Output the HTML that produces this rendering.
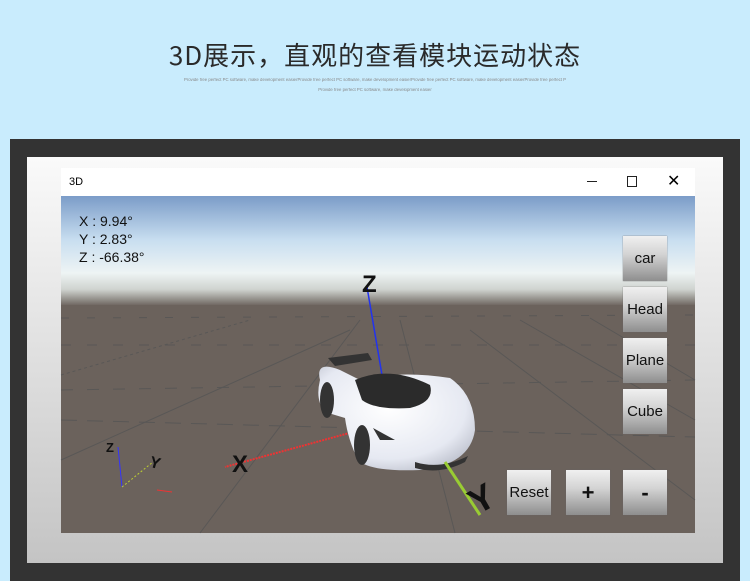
<!DOCTYPE html>
<html><head><meta charset="utf-8"><style>
body{margin:0;width:750px;height:581px;overflow:hidden;background:#c9ecfd;font-family:"Liberation Sans","Noto Sans CJK SC",sans-serif;position:relative}
.t{position:absolute;top:36px;left:0;width:750px;text-align:center;font-size:26px;color:#2a2a2a;font-family:"Noto Sans CJK SC","Liberation Sans",sans-serif;font-weight:400;letter-spacing:1px}
.s{position:absolute;left:0;width:750px;text-align:center;font-size:5.5px;color:#888;transform:scale(.78);transform-origin:375px 0}
.btn{position:absolute;width:44px;height:45px;background:linear-gradient(#f0f0f0,#d4d4d4 40%,#8e8e8e);color:#111;font-size:15px;display:flex;align-items:center;justify-content:center;box-shadow:0 0 1px #666}
</style></head><body>
<div class="t">3D展示，直观的查看模块运动状态</div>
<div class="s" style="top:78px">Provide free perfect PC software, make development easierProvide free perfect PC software, make development easierProvide free perfect PC software, make development easierProvide free perfect P</div>
<div class="s" style="top:88px">Provide free perfect PC software, make development easier</div>
<div style="position:absolute;left:10px;top:139px;width:730px;height:442px;background:#333"></div>
<div style="position:absolute;left:27px;top:157px;width:696px;height:406px;background:linear-gradient(#fafafa,#c4c4c4)"></div>
<div style="position:absolute;left:61px;top:168px;width:634px;height:28px;background:#fff;font-size:11px">
<span style="position:absolute;left:8px;top:8px">3D</span>
<span style="position:absolute;left:526px;top:13px;width:10px;height:1px;background:#222"></span>
<span style="position:absolute;left:566px;top:8px;width:8px;height:9px;border:1px solid #222"></span>
<span style="position:absolute;left:606px;top:3px;font-size:16px">✕</span>
</div>
<svg style="position:absolute;left:0;top:0" width="750" height="581" viewBox="0 0 750 581">
<defs><linearGradient id="sky" x1="0" y1="0" x2="0" y2="1">
<stop offset="0" stop-color="#7b9cc8"/><stop offset=".4" stop-color="#c8def0"/><stop offset=".7" stop-color="#eef4f4"/><stop offset=".85" stop-color="#cfd3cf"/><stop offset="1" stop-color="#6b625c"/></linearGradient>
<radialGradient id="car" cx=".45" cy=".4" r=".7"><stop offset="0" stop-color="#fff"/><stop offset=".7" stop-color="#e6e9f2"/><stop offset="1" stop-color="#b8bcc8"/></radialGradient></defs>
<rect x="61" y="196" width="634" height="110" fill="url(#sky)"/>
<rect x="61" y="305" width="634" height="228" fill="#6b625c"/>
<g stroke="#555" stroke-width="1" fill="none" opacity=".8">
<line x1="61" y1="420" x2="695" y2="437" stroke-dasharray="16 10"/>
<line x1="61" y1="390" x2="695" y2="380" stroke-dasharray="12 14"/>
<line x1="61" y1="345" x2="695" y2="345" stroke-dasharray="10 16"/>
<line x1="61" y1="318" x2="695" y2="315" stroke-dasharray="8 18"/>
<line x1="61" y1="460" x2="350" y2="330"/>
<line x1="200" y1="533" x2="360" y2="320"/>
<line x1="455" y1="533" x2="400" y2="320"/>
<line x1="695" y1="500" x2="470" y2="330"/>
<line x1="695" y1="420" x2="520" y2="320"/>
<line x1="695" y1="380" x2="590" y2="318"/>
<line x1="61" y1="375" x2="250" y2="320" stroke-dasharray="3 3"/>
</g>
<line x1="367" y1="287" x2="382" y2="375" stroke="#2233ee" stroke-width="1.5"/>
<text x="362" y="292" font-size="24" font-family="Liberation Sans" font-weight="bold" fill="#111">Z</text>
<line x1="353" y1="432" x2="225" y2="467" stroke="#e33" stroke-width="2" stroke-dasharray="2 1"/>
<text x="232" y="472" font-size="24" fill="#111" font-weight="bold">X</text>
<path d="M328 358 L368 353 L372 360 L335 366Z" fill="#333"/>
<path d="M320 380 Q315 360 340 370 L360 380 Q400 370 450 378 Q475 395 475 430 Q470 465 420 470 Q370 472 358 460 Q348 440 345 418 L325 412 Q315 400 320 380Z" fill="url(#car)"/>
<path d="M355 380 Q390 365 430 385 Q435 402 410 408 Q375 410 362 400Z" fill="#2b2b2b"/>
<ellipse cx="327" cy="400" rx="7" ry="18" fill="#333"/>
<ellipse cx="362" cy="445" rx="8" ry="20" fill="#333"/>
<path d="M415 462 Q440 470 468 456 L465 462 Q440 475 415 468Z" fill="#333"/>
<path d="M373 428 L395 440 L380 440Z" fill="#333"/>
<path d="M445 462 L480 515" stroke="#9c3" stroke-width="3"/>
<text x="470" y="512" font-size="36" fill="#111" font-weight="bold" transform="rotate(-30 480 500)">Y</text>
<line x1="118" y1="447" x2="122" y2="487" stroke="#33f"/>
<line x1="122" y1="487" x2="153" y2="462" stroke="#bc3" stroke-dasharray="2 2"/>
<line x1="157" y1="490" x2="172" y2="492" stroke="#e33"/>
<text x="106" y="452" font-size="13" fill="#111" font-weight="bold">Z</text>
<text x="150" y="468" font-size="16" fill="#111" font-weight="bold" transform="rotate(15 155 462)">Y</text>
</svg>
<div style="position:absolute;left:79px;top:212px;font-size:14px;line-height:18px;color:#111">X : 9.94°<br>Y : 2.83°<br>Z : -66.38°</div>
<div class="btn" style="left:623px;top:236px">car</div>
<div class="btn" style="left:623px;top:287px">Head</div>
<div class="btn" style="left:623px;top:338px">Plane</div>
<div class="btn" style="left:623px;top:389px">Cube</div>
<div class="btn" style="left:507px;top:470px">Reset</div>
<div class="btn" style="left:566px;top:470px;font-size:22px;font-weight:bold">+</div>
<div class="btn" style="left:623px;top:470px;font-size:22px;font-weight:bold">-</div>
</body></html>
